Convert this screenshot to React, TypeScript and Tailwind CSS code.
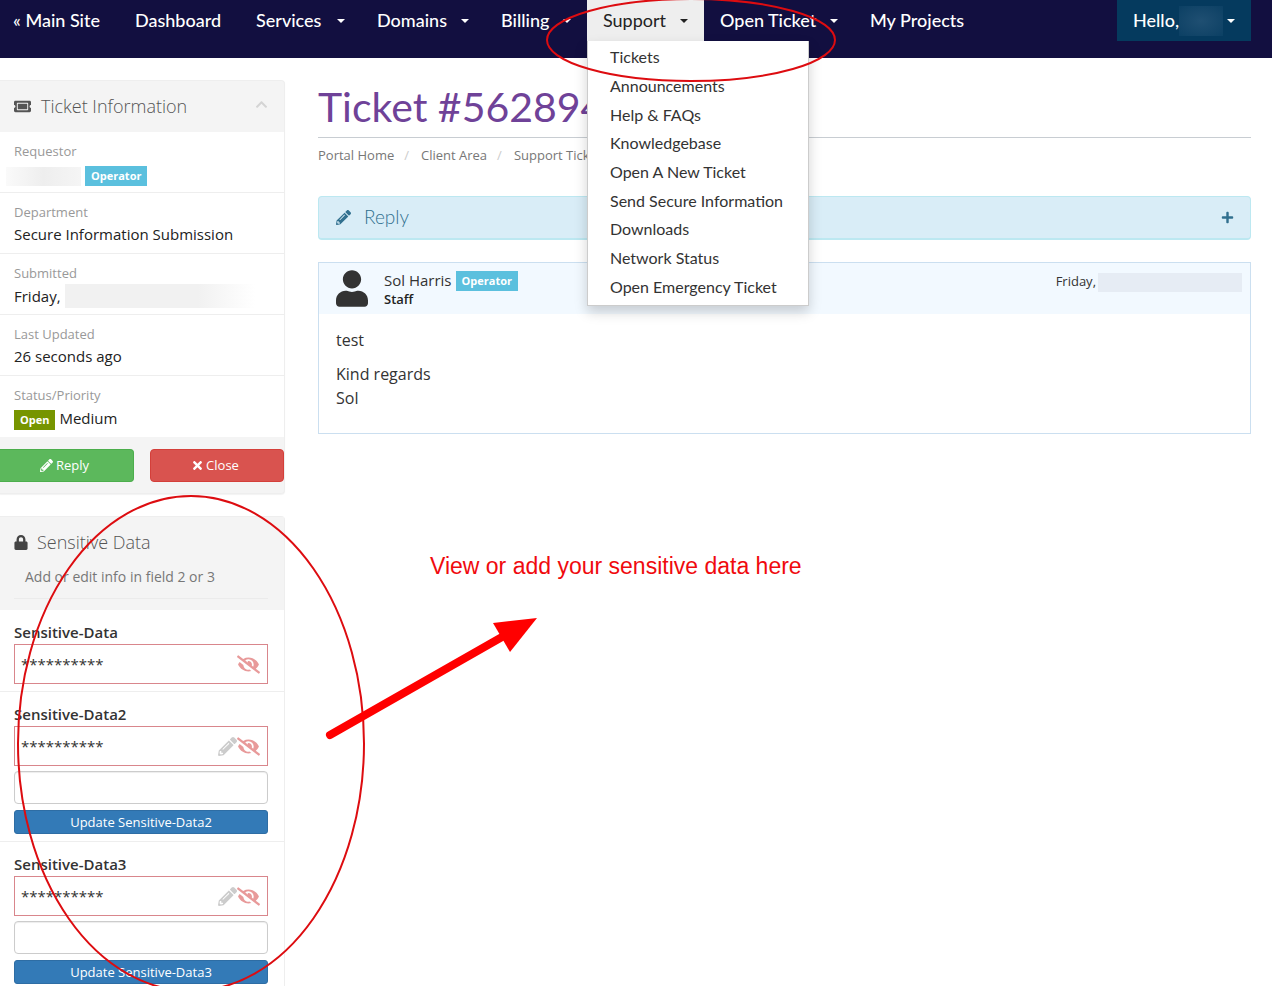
import type { ReactNode } from "react";
import {
  FaChevronUp,
  FaEyeSlash,
  FaLock,
  FaPencilAlt,
  FaPlus,
  FaTicketAlt,
  FaTimes,
  FaUser,
} from "react-icons/fa";

const navItems = [
  { label: "« Main Site", width: "w-[122px]" },
  { label: "Dashboard", width: "w-[121px]" },
  { label: "Services", width: "w-[121px]", menu: true },
  { label: "Domains", width: "w-[124px]", menu: true },
  { label: "Billing", width: "w-[102px]", menu: true },
  { label: "Support", width: "w-[117px]", menu: true, open: true },
  { label: "Open Ticket", width: "w-[150px]", menu: true },
  { label: "My Projects", width: "w-[127px]" },
];

const supportMenu = [
  "Tickets",
  "Announcements",
  "Help & FAQs",
  "Knowledgebase",
  "Open A New Ticket",
  "Send Secure Information",
  "Downloads",
  "Network Status",
  "Open Emergency Ticket",
];

function Caret() {
  return (
    <span className="block h-0 w-0 border-x-4 border-t-4 border-x-transparent border-t-current" />
  );
}

function Badge({ children, tone }: { children: ReactNode; tone: string }) {
  return (
    <span
      className={`inline-flex h-5 items-center px-[6px] text-[11px] font-bold text-white ${tone}`}
    >
      {children}
    </span>
  );
}

function NavBar() {
  return (
    <header className="h-[58px] bg-[#120f40] pr-[21px] font-['Lato',sans-serif] text-[18px] font-medium text-white">
      <nav className="-ml-[3px] flex h-[41px]" aria-label="Main">
        {navItems.map((item) => (
          <div key={item.label} className={`relative shrink-0 ${item.width}`}>
            {item.menu ? (
              <button
                type="button"
                aria-expanded={!!item.open}
                className={`flex h-full w-full items-center justify-between px-4 whitespace-nowrap ${
                  item.open ? "bg-[#eeeeee] font-normal text-[#222222]" : ""
                }`}
              >
                {item.label}
                <Caret />
              </button>
            ) : (
              <a href="#" className="flex h-full items-center px-4 whitespace-nowrap">
                {item.label}
              </a>
            )}
            {item.open && (
              <ul className="absolute top-full left-0 z-10 grid h-[265px] w-[222px] auto-rows-fr border border-t-0 border-black/20 bg-white pt-[2px] pb-1 text-base font-normal text-[#333333] shadow-[0_6px_12px_rgba(0,0,0,0.18)]">
                {supportMenu.map((entry) => (
                  <li key={entry} className="flex items-center">
                    <a href="#" className="block w-full px-[22px] whitespace-nowrap">
                      {entry}
                    </a>
                  </li>
                ))}
              </ul>
            )}
          </div>
        ))}
        <button
          type="button"
          aria-label="Account"
          className="ml-auto flex w-[134px] items-center bg-[#053a5e] px-4"
        >
          Hello,
          <span className="h-[30px] w-[44px] bg-radial from-[#1f4f72] to-[#0b4064]" />
          <span className="ml-auto">
            <Caret />
          </span>
        </button>
      </nav>
    </header>
  );
}

function InfoRow({ label, children }: { label: string; children: ReactNode }) {
  return (
    <div className="h-[61px] border-b border-[#eeeeee] px-[14px] pt-2 leading-[22px] last:border-b-0">
      <dt className="text-[13px] text-[#999999]">{label}</dt>
      <dd className="flex items-center gap-1 text-[15px] text-[#222222]">{children}</dd>
    </div>
  );
}

function TicketPanel() {
  return (
    <section className="rounded-r border border-l-0 border-[#eeeeee] bg-[#f4f4f4] shadow-[0_1px_1px_rgba(0,0,0,0.05)]">
      <h2 className="flex h-[51px] items-center px-[14px] text-[18px] font-light text-[#555555]">
        <FaTicketAlt className="mr-[10px] size-[17px]" />
        Ticket Information
        <button type="button" aria-label="Collapse" className="mr-0.5 ml-auto pb-1 text-[#d4d4d4]">
          <FaChevronUp className="size-[13px]" />
        </button>
      </h2>
      <dl className="bg-white">
        <InfoRow label="Requestor">
          <span className="mt-1 -ml-2 h-[19px] w-[75px] bg-linear-to-r from-[#fafafa] via-[#eeeeee] to-[#f5f5f5]" />
          <span className="flex pt-1">
            <Badge tone="bg-[#5bc0de]">Operator</Badge>
          </span>
        </InfoRow>
        <InfoRow label="Department">Secure Information Submission</InfoRow>
        <InfoRow label="Submitted">
          Friday,
          <span className="h-[24px] w-[190px] bg-linear-to-r from-[#f1f1f1] from-70% to-white" />
        </InfoRow>
        <InfoRow label="Last Updated">26 seconds ago</InfoRow>
        <InfoRow label="Status/Priority">
          <span className="flex pt-1">
            <Badge tone="bg-[#779500]">Open</Badge>
          </span>
          Medium
        </InfoRow>
      </dl>
      <div className="grid grid-cols-2 gap-4 pt-3 pb-[11px] text-[13px] text-white">
        <button
          type="button"
          className="flex h-[33px] items-center justify-center gap-[3px] rounded-r border border-l-0 border-[#4cae4c] bg-[#5cb85c] pr-1"
        >
          <FaPencilAlt className="size-[13px]" />
          Reply
        </button>
        <button
          type="button"
          className="flex h-[33px] items-center justify-center gap-0.5 rounded border border-[#d43f3a] bg-[#d9534f] pr-1"
        >
          <FaTimes className="size-[13px]" />
          Close
        </button>
      </div>
    </section>
  );
}

function SecretRow({ name, editable = false }: { name: string; editable?: boolean }) {
  const id = name.toLowerCase();
  return (
    <div className="border-b border-[#eeeeee] pt-[10px] pr-4 pb-[7px] pl-[14px] last:border-b-0">
      <label
        htmlFor={editable ? id : undefined}
        className="block text-[15px] leading-6 font-semibold text-[#333333]"
      >
        {name}
      </label>
      <div className="flex h-10 items-center border border-[#d9868c] pr-[7px] pl-[6px] text-[#333333]">
        <span className="text-[15px]">**********</span>
        <span className="ml-auto flex items-center">
          {editable && (
            <button type="button" aria-label={`Edit ${name}`} className="text-[#cccccc]">
              <FaPencilAlt className="size-[19px]" />
            </button>
          )}
          <button type="button" aria-label={`Show ${name}`} className="text-[#e89a9a]">
            <FaEyeSlash className="size-[23px]" />
          </button>
        </span>
      </div>
      {editable && (
        <>
          <input
            id={id}
            type="text"
            className="mt-[5px] block h-[33px] w-full rounded border border-[#cccccc] bg-white px-3 shadow-[inset_0_1px_1px_rgba(0,0,0,0.075)]"
          />
          <button
            type="button"
            className="mt-[6px] block h-6 w-full rounded-[3px] border border-[#2e6da4] bg-[#337ab7] text-[13px] leading-[22px] text-white"
          >
            Update {name}
          </button>
        </>
      )}
    </div>
  );
}

function SensitivePanel() {
  return (
    <section className="rounded-r border border-l-0 border-[#eeeeee] bg-white">
      <div className="h-[93px] bg-[#f4f4f4] px-[14px] pt-[13px]">
        <h2 className="flex h-6 items-center gap-[9px] text-[18px] font-light text-[#555555]">
          <FaLock className="h-[15px] w-[14px] text-[#444444]" />
          Sensitive Data
        </h2>
        <p className="mr-[2px] h-[45px] border-b border-[#ebebeb] pt-[13px] pl-[11px] text-[14px] leading-5 text-[#777777]">
          Add or edit info in field 2 or 3
        </p>
      </div>
      <SecretRow name="Sensitive-Data" />
      <SecretRow name="Sensitive-Data2" editable />
      <SecretRow name="Sensitive-Data3" editable />
    </section>
  );
}

function Conversation() {
  return (
    <main className="min-w-0 flex-1">
      <h1 className="h-[58px] border-b border-[#c8cdd2] font-['Lato',sans-serif] text-[41px] leading-[54px] whitespace-nowrap text-[#6f4298]">
        Ticket #562894
      </h1>
      <nav aria-label="Breadcrumb" className="pt-[7px] text-[13px] leading-5 text-[#777777]">
        <ol className="flex">
          <li>
            <a href="#">Portal Home</a>
            <span className="pr-3 pl-[10px] text-[#cccccc]">/</span>
          </li>
          <li>
            <a href="#">Client Area</a>
            <span className="pr-3 pl-[10px] text-[#cccccc]">/</span>
          </li>
          <li>Support Tickets</li>
        </ol>
      </nav>
      <button
        type="button"
        className="mt-[31px] flex h-11 w-full items-center rounded border border-b-2 border-[#bce8f1] bg-[#d9edf7] pr-4 pl-[17px] font-['Lato',sans-serif] text-[19px] font-light text-[#31708f]"
      >
        <FaPencilAlt className="mr-[13px] size-[15px]" />
        Reply
        <FaPlus className="ml-auto size-[13px]" />
      </button>
      <article className="mt-[22px] border border-[#cbdff0] text-[#333333]">
        <header className="flex h-[51px] bg-[#f2f9ff] pr-2 pl-[17px]">
          <FaUser className="mt-[7px] mr-4 h-[37px] w-8" />
          <div className="pt-[6px]">
            <div className="flex h-[22px] items-center gap-1 text-[15px]">
              Sol Harris
              <span className="flex pt-0.5">
                <Badge tone="bg-[#5bc0de]">Operator</Badge>
              </span>
            </div>
            <div className="text-[13px] leading-4 font-semibold text-[#222222]">Staff</div>
          </div>
          <div className="ml-auto flex h-[38px] items-center gap-0.5 text-[13px]">
            Friday,
            <span className="h-[19px] w-[144px] bg-[#e6ecf4]" />
          </div>
        </header>
        <div className="px-[17px] pt-[14px] pb-[23px] text-base leading-6">
          <p className="mb-[10px]">test</p>
          <p>
            Kind regards
            <br />
            Sol
          </p>
        </div>
      </article>
    </main>
  );
}

function Annotations() {
  return (
    <div className="pointer-events-none absolute inset-0 z-20 overflow-hidden">
      <svg width="1272" height="986" fill="none" aria-hidden="true">
        <ellipse cx="691" cy="40" rx="144" ry="41" stroke="#dd0c10" strokeWidth="2" />
        <ellipse cx="191" cy="743.5" rx="173" ry="247.5" stroke="#dd0c10" strokeWidth="2" />
        <path d="M330 735 502 637" stroke="#ff0000" strokeWidth="8" strokeLinecap="round" />
        <path d="M493 623 537 618 510 652Z" fill="#ff0000" />
      </svg>
      <p className="absolute top-[552px] left-[430px] font-['Liberation_Sans',sans-serif] text-[23px] leading-7 whitespace-nowrap text-[#f00a0e]">
        View or add your sensitive data here
      </p>
    </div>
  );
}

export default function App() {
  return (
    <div className="relative min-h-screen overflow-hidden bg-white font-['Open_Sans',sans-serif]">
      <NavBar />
      <div className="flex items-start gap-[33px] pt-[22px] pr-[21px]">
        <aside className="flex w-[285px] shrink-0 flex-col gap-[22px]">
          <TicketPanel />
          <SensitivePanel />
        </aside>
        <Conversation />
      </div>
      <Annotations />
    </div>
  );
}
